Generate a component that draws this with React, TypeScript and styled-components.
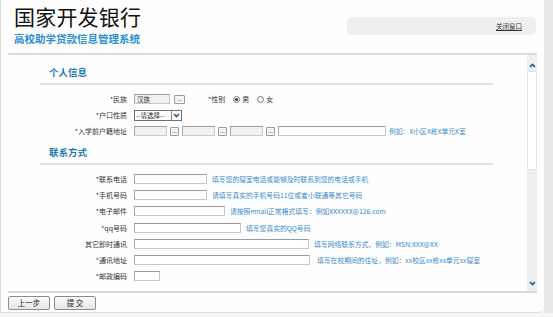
import React from "react"
import styled, { createGlobalStyle } from "styled-components"

const GlobalStyle = createGlobalStyle`
    html, body {
        margin: 0;
        padding: 0;
        background: #f6f6f6;
        font-family: "Noto Sans CJK SC", "Liberation Sans", sans-serif;
    }
`

const personal = [
    { label: "*民族" },
    { label: "*户口性质" },
    { label: "*入学前户籍地址" },
]

const contacts = [
    { label: "*联系电话", width: 73, hint: "填写您的寝室电话或能够及时联系到您的电话或手机" },
    { label: "*手机号码", width: 73, hint: "请填写真实的手机号码11位或者小联通等其它号码" },
    { label: "*电子邮件", width: 91, hint: "请按照email正常格式填写：例如XXXXXX@126.com" },
    { label: "*qq号码", width: 107, hint: "填写您真实的QQ号码" },
    { label: "其它即时通讯", width: 175, hint: "填写网络联系方式，例如：MSN:XXX@XX" },
    { label: "*通讯地址", width: 176, hint: "填写在校期间的住址，例如：xx校区xx栋xx单元xx寝室", gap: 7 },
    { label: "*邮政编码", width: 26 },
]

const Chevron = ({ up }: { up?: boolean }) => (
    <svg width="7" height="5" viewBox="0 0 7 5">
        <path d={up ? "M1 4 L3.5 1.5 L6 4" : "M1 1 L3.5 3.5 L6 1"} fill="none" stroke="#1d5f8f" strokeWidth="1.6" />
    </svg>
)

const Radio = ({ checked }: { checked?: boolean }) => (
    <RadioDot>{checked && <RadioInner />}</RadioDot>
)

export default function App() {
    return (
        <Page>
            <GlobalStyle />
            <Card>
                <Header>
                    <Brand>
                        <Title>国家开发银行</Title>
                        <Subtitle>高校助学贷款信息管理系统</Subtitle>
                    </Brand>
                    <Toolbar>
                        <CloseLink>关闭窗口</CloseLink>
                    </Toolbar>
                </Header>
                <ScrollFrame>
                    <FormBody>
                        <SectionTitle>个人信息</SectionTitle>
                        <Rows $step={16}>
                            <Row>
                                <Label>{personal[0].label}</Label>
                                <Field>
                                    <Input $w={36} $readonly>汉族</Input>
                                    <DotsButton $w={11}>...</DotsButton>
                                    <Label style={{ marginLeft: 19 }}>*性别</Label>
                                    <RadioGroup>
                                        <Radio checked />男
                                    </RadioGroup>
                                    <RadioGroup>
                                        <Radio />女
                                    </RadioGroup>
                                </Field>
                            </Row>
                            <Row>
                                <Label>{personal[1].label}</Label>
                                <Field>
                                    <Select>
                                        <SelectText>--请选择--</SelectText>
                                        <SelectArrow><Chevron /></SelectArrow>
                                    </Select>
                                </Field>
                            </Row>
                            <Row>
                                <Label>{personal[2].label}</Label>
                                <Field $gap={3}>
                                    {[0, 1, 2].map(i => (
                                        <React.Fragment key={i}>
                                            <Input $w={33} $readonly />
                                            <DotsButton $w={9}>...</DotsButton>
                                        </React.Fragment>
                                    ))}
                                    <Input $w={108} />
                                    <Hint>例如：X小区X栋X单元X室</Hint>
                                </Field>
                            </Row>
                        </Rows>
                        <SectionTitle $spaced>联系方式</SectionTitle>
                        <Rows $step={16.2}>
                            {contacts.map(c => (
                                <Row key={c.label}>
                                    <Label>{c.label}</Label>
                                    <Field $gap={c.gap ?? 5}>
                                        <Input $w={c.width} />
                                        {c.hint && <Hint>{c.hint}</Hint>}
                                    </Field>
                                </Row>
                            ))}
                        </Rows>
                    </FormBody>
                    <ScrollBar>
                        <ArrowCell><Chevron up /></ArrowCell>
                        <Thumb />
                        <Track />
                        <ArrowCell $bottom><Chevron /></ArrowCell>
                    </ScrollBar>
                </ScrollFrame>
                <Footer>
                    <Button>上一步</Button>
                    <Button>提 交</Button>
                </Footer>
            </Card>
            <Gutter />
        </Page>
    )
}

const Page = styled.div`
    width: 553px;
    height: 317px;
    display: flex;
    align-items: flex-start;
    overflow: hidden;
`

const Card = styled.div`
    width: 544px;
    height: 313px;
    box-sizing: border-box;
    background: #fefefe;
    border-left: 1px solid #dadada;
    border-bottom: 1px solid #e0e0e0;
    border-bottom-right-radius: 6px;
    display: flex;
    flex-direction: column;
`

const Gutter = styled.div`
    width: 9px;
    height: 313px;
    background: #e9e9e9;
`

const Header = styled.div`
    height: 53px;
    flex: none;
    box-sizing: border-box;
    padding: 5px 8px 0 13px;
    display: flex;
    justify-content: space-between;
    align-items: flex-start;
`

const Brand = styled.div`
    display: flex;
    flex-direction: column;
    gap: 6px;
`

const Title = styled.div`
    font-size: 21px;
    line-height: 22px;
    color: #111;
    letter-spacing: 0.2px;
`

const Subtitle = styled.div`
    font-size: 10.5px;
    line-height: 12px;
    font-weight: bold;
    color: #2b8fd3;
`

const Toolbar = styled.div`
    margin-top: 12px;
    width: 189px;
    height: 18px;
    box-sizing: border-box;
    background: #efefef;
    border-radius: 5px;
    display: flex;
    align-items: center;
    justify-content: flex-end;
    padding-right: 14px;
`

const CloseLink = styled.a`
    font-size: 6.5px;
    color: #333;
    text-decoration: underline;
    cursor: pointer;
`

const ScrollFrame = styled.div`
    margin: 0 7px;
    height: 240px;
    flex: none;
    box-sizing: border-box;
    border-top: 2px solid #dcdcdc;
    border-bottom: 2px solid #d8d8d8;
    display: flex;
`

const FormBody = styled.div`
    flex: 1;
    overflow: hidden;
    padding: 11px 34px 0 32px;
`

const SectionTitle = styled.div<{ $spaced?: boolean }>`
    margin-top: ${p => (p.$spaced ? 7 : 0)}px;
    padding: 0 0 5px 9px;
    font-size: 9.5px;
    line-height: 12px;
    font-weight: bold;
    font-family: "Noto Sans CJK SC", serif;
    color: #1f78b4;
    border-bottom: 2px solid #e4e4e4;
`

const Rows = styled.div<{ $step: number }>`
    margin-top: 6px;
    display: grid;
    grid-auto-rows: ${p => p.$step}px;
`

const Row = styled.div`
    display: grid;
    grid-template-columns: 87px 1fr;
    column-gap: 7px;
    align-items: center;
`

const Label = styled.span`
    font-size: 7px;
    color: #333;
    text-align: right;
    white-space: nowrap;
`

const Field = styled.div<{ $gap?: number }>`
    display: flex;
    align-items: center;
    gap: ${p => p.$gap ?? 4}px;
`

const Input = styled.div<{ $w: number; $readonly?: boolean }>`
    width: ${p => p.$w}px;
    height: 10px;
    flex: none;
    box-sizing: border-box;
    background: ${p => (p.$readonly ? "#f1f1f1" : "#fff")};
    border: 1px solid #c8c8c8;
    border-top-color: #9a9a9a;
    border-left-color: #a8a8a8;
    font-size: 6.5px;
    line-height: 8px;
    padding-left: 2px;
    color: #333;
`

const DotsButton = styled.div<{ $w: number }>`
    width: ${p => p.$w}px;
    height: 9px;
    flex: none;
    box-sizing: border-box;
    border: 1px solid #9c9c9c;
    border-radius: 1px;
    background: #f5f5f5;
    font-size: 6px;
    line-height: 5px;
    text-align: center;
    color: #333;
`

const RadioGroup = styled.span`
    display: flex;
    align-items: center;
    gap: 2px;
    margin-left: 4px;
    font-size: 7px;
    color: #333;
`

const RadioDot = styled.span`
    width: 7px;
    height: 7px;
    box-sizing: border-box;
    border: 1px solid #777;
    border-radius: 50%;
    display: flex;
    align-items: center;
    justify-content: center;
    background: #fff;
`

const RadioInner = styled.span`
    width: 3px;
    height: 3px;
    border-radius: 50%;
    background: #333;
`

const Select = styled.div`
    width: 48px;
    height: 11px;
    box-sizing: border-box;
    border: 1px solid #6f6f6f;
    display: flex;
    align-items: stretch;
    background: #fff;
`

const SelectText = styled.span`
    flex: 1;
    font-size: 6.5px;
    line-height: 9px;
    padding-left: 1px;
    color: #222;
    white-space: nowrap;
    overflow: hidden;
`

const SelectArrow = styled.span`
    width: 9px;
    border-left: 1px solid #888;
    display: flex;
    align-items: center;
    justify-content: center;
`

const Hint = styled.span`
    font-size: 6.8px;
    color: #3a8bc9;
    white-space: nowrap;
`

const ScrollBar = styled.div`
    width: 10px;
    flex: none;
    background: #efefef;
    display: flex;
    flex-direction: column;
`

const ArrowCell = styled.div<{ $bottom?: boolean }>`
    height: 16px;
    flex: none;
    display: flex;
    justify-content: center;
    align-items: ${p => (p.$bottom ? "flex-start" : "flex-end")};
    padding: ${p => (p.$bottom ? "6px 0 0" : "0 0 3px")};
    box-sizing: border-box;
`

const Thumb = styled.div`
    height: 99px;
    flex: none;
    background: #fff;
    border: 1px solid #e2e2e2;
    box-sizing: border-box;
`

const Track = styled.div`
    flex: 1;
`

const Footer = styled.div`
    display: flex;
    gap: 4px;
    padding: 3px 0 0 7px;
`

const Button = styled.button`
    width: 42px;
    height: 14px;
    padding: 0;
    box-sizing: border-box;
    border: 1px solid #8c8c8c;
    border-radius: 2px;
    background: linear-gradient(#fbfbfb, #e6e6e6);
    font-family: "Noto Sans CJK SC", sans-serif;
    font-size: 7.5px;
    line-height: 12px;
    color: #222;
`
